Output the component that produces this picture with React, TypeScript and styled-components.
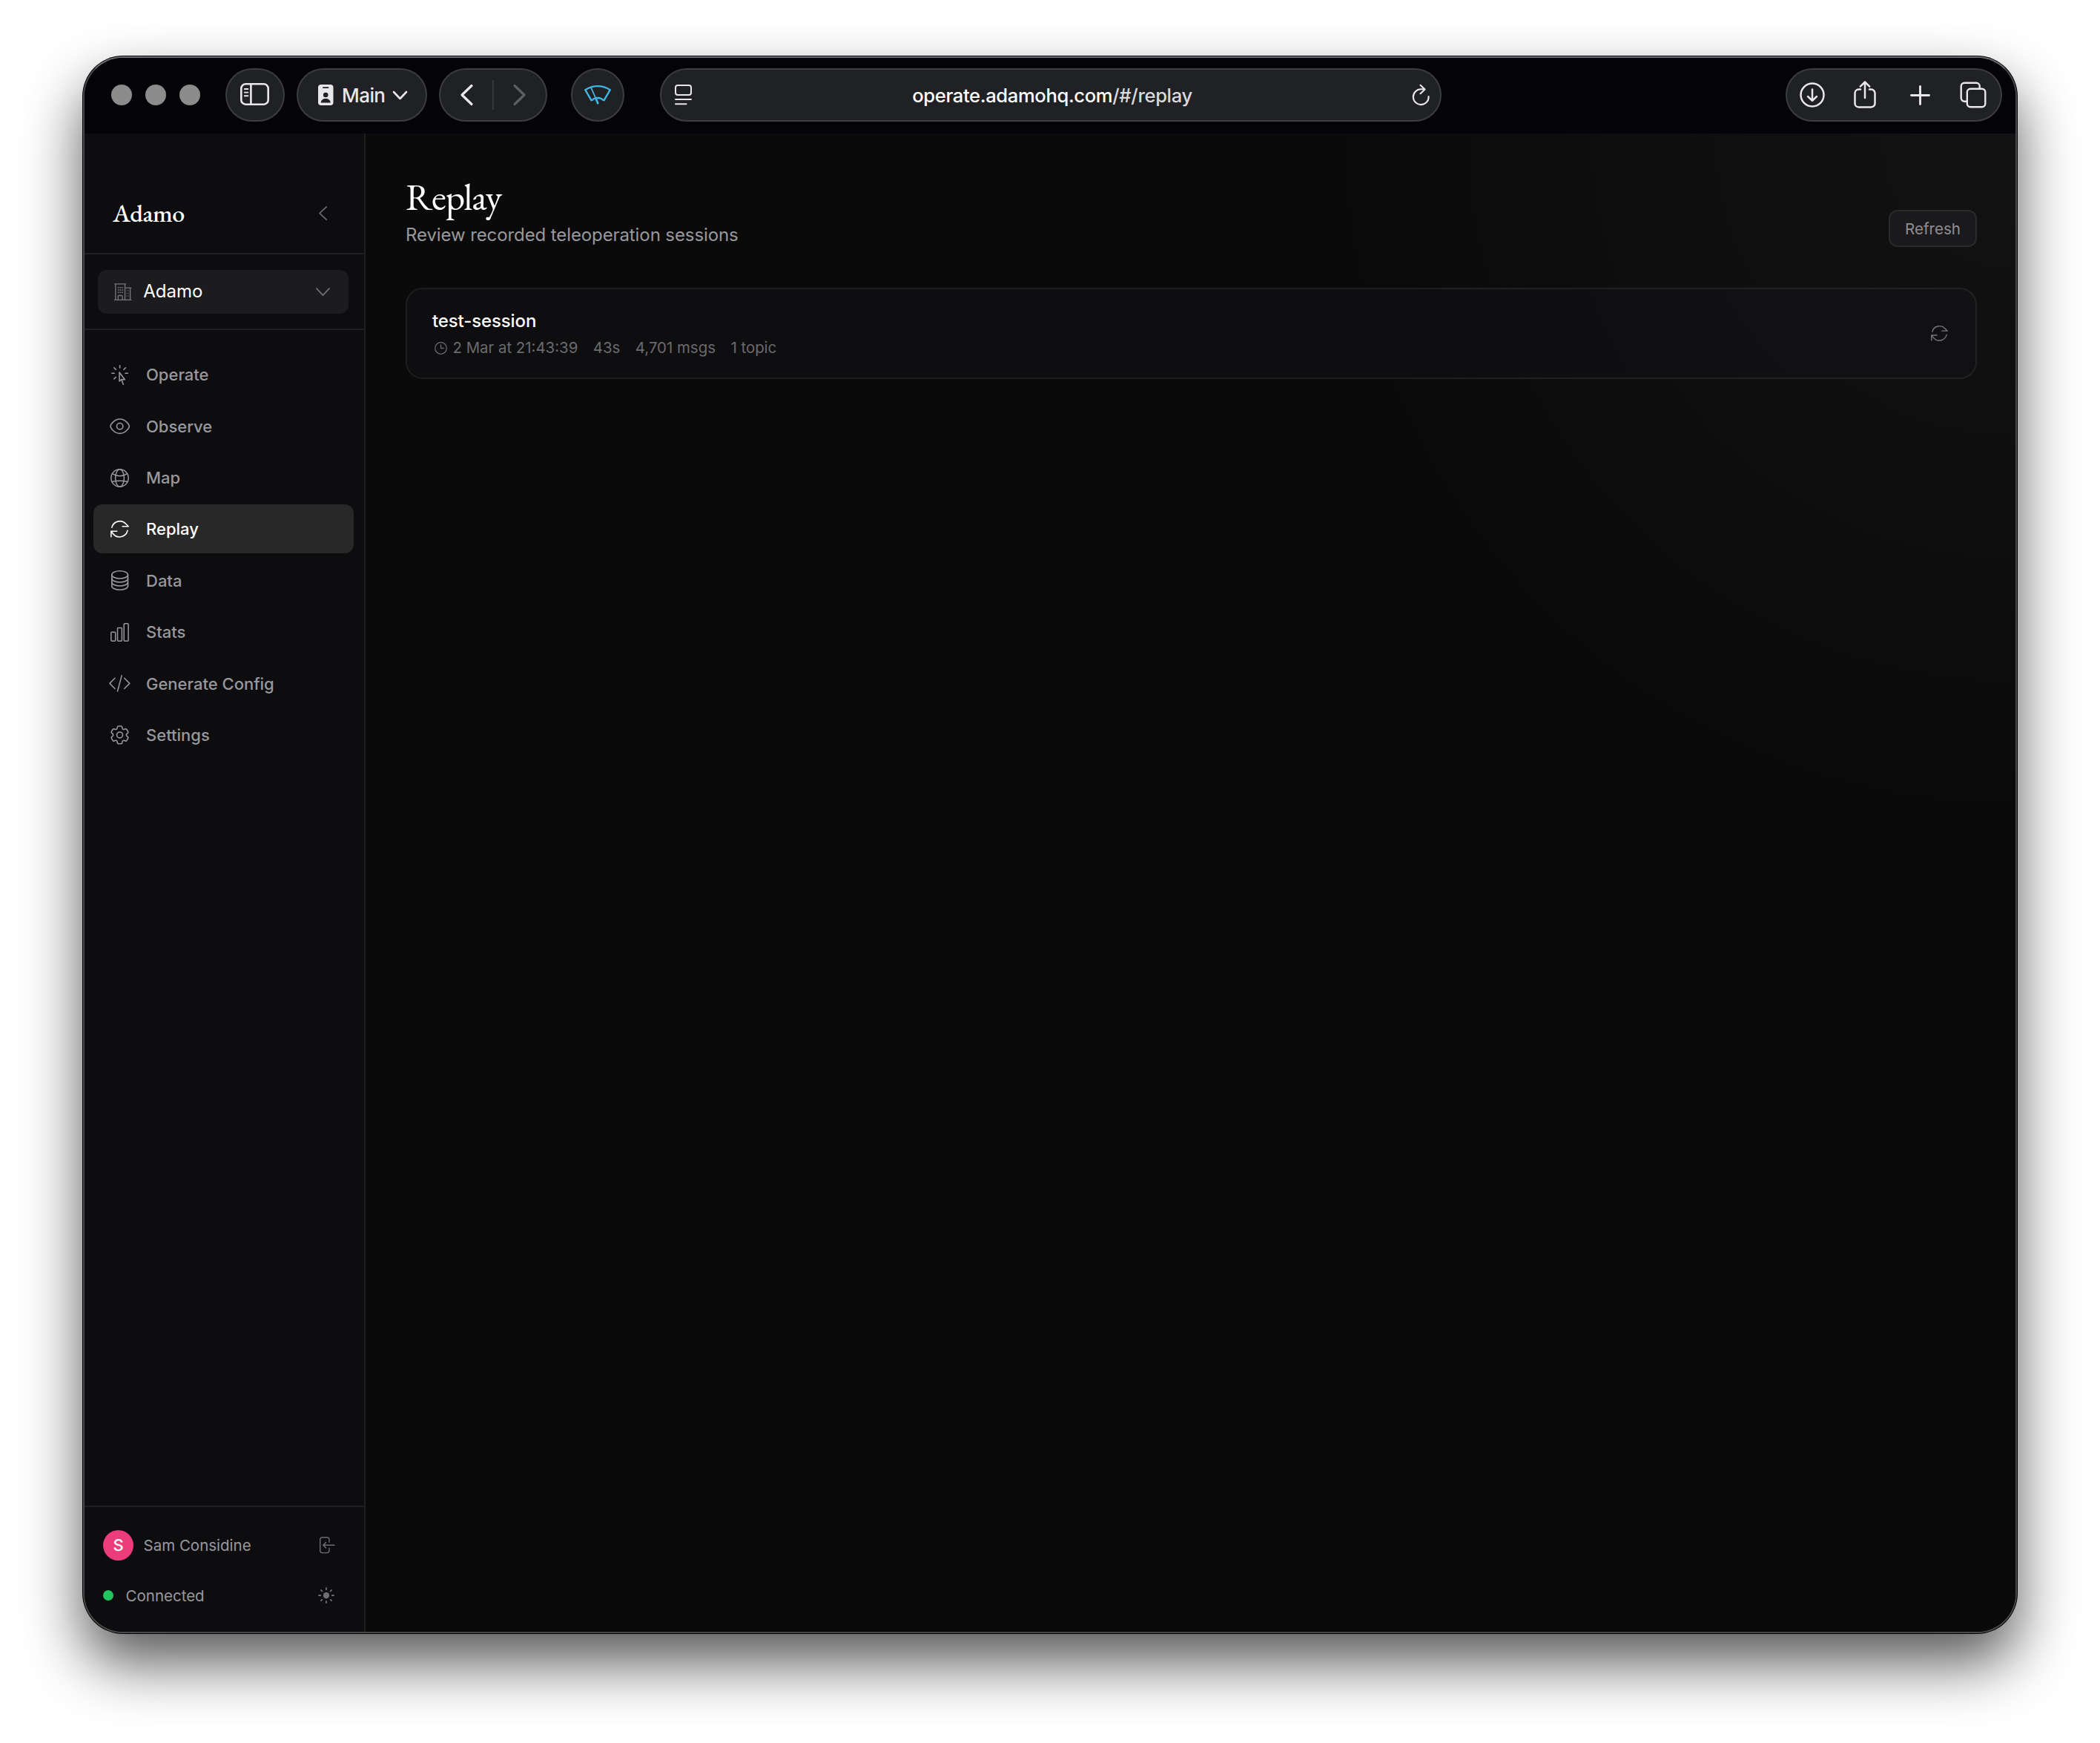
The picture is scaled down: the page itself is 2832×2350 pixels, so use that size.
import React from "react";
import styled, { createGlobalStyle } from "styled-components";

const GlobalStyle = createGlobalStyle`
  * { box-sizing: border-box; }
  html, body { margin: 0; background: #fff; }
  body { font-family: Inter, "Liberation Sans", sans-serif; -webkit-font-smoothing: antialiased; }
  button { font: inherit; color: inherit; }
`;

const Desktop = styled.div`
  width: 2832px;
  height: 2350px;
  padding: 76px 112px 148px;
  overflow: hidden;
  background: #fff;
`;

const Window = styled.div`
  height: 2126px;
  display: flex;
  flex-direction: column;
  overflow: hidden;
  border: 2px solid #4a4a4c;
  border-top-color: #6c6d70;
  border-radius: 54px;
  background: #0a0a0a;
  box-shadow: 0 0 0 1px #000, 0 40px 80px rgba(0, 0, 0, 0.66);
`;

/* Browser chrome */

const Toolbar = styled.header`
  flex: none;
  height: 102px;
  padding: 0 18px 2px 36px;
  display: flex;
  align-items: center;
  background: #040408;
  color: #e8e8ea;
`;

const TrafficLights = styled.div`
  display: flex;
  gap: 18px;
  margin-right: 34px;
`;

const Light = styled.span`
  width: 28px;
  height: 28px;
  border-radius: 50%;
  background: #8c8c8c;
`;

const Pill = styled.div<{ $w: number; $after?: number }>`
  flex: none;
  width: ${(p) => p.$w}px;
  height: 72px;
  margin-right: ${(p) => p.$after ?? 0}px;
  display: flex;
  align-items: center;
  justify-content: center;
  border: 2px solid #3c3d40;
  border-radius: 36px;
  background: #202124;
`;

const SidebarPill = styled(Pill)`
  padding: 0 2px 2px 0;
`;

const ProfilePill = styled(Pill)`
  gap: 11px;
  padding-left: 2px;
  font-size: 26px;
  font-weight: 500;
`;

const ProfileName = styled.span`
  padding-left: 1px;
  letter-spacing: -0.6px;
`;

const HistoryPill = styled(Pill)`
  gap: 26px;
`;

const HistoryDivider = styled.span`
  width: 2px;
  height: 40px;
  background: #36373a;
`;

const AddressPill = styled(Pill)`
  justify-content: space-between;
  padding: 0 14px 0 18px;
  margin-right: auto;
`;

const Address = styled.span`
  font-size: 25.6px;
  font-weight: 500;
  letter-spacing: -0.36px;
  color: #fff;
`;

const AddressPath = styled.span`
  color: #d9d9dc;
`;

const ActionsPill = styled(Pill)`
  justify-content: space-between;
  padding: 0 19px 0 17px;
`;

/* Page */

const Page = styled.div`
  flex: 1;
  display: flex;
  min-height: 0;
`;

const Sidebar = styled.aside`
  flex: none;
  width: 379px;
  display: flex;
  flex-direction: column;
  border-right: 2px solid #1f1f21;
  background: #0d0d0f;
  color: #98989d;
`;

const Brand = styled.div`
  height: 163px;
  padding: 54px 50px 0 38px;
  display: flex;
  align-items: center;
  justify-content: space-between;
  border-bottom: 2px solid #1f1f21;
  color: #6e6e73;
`;

const BrandName = styled.span`
  margin-bottom: 2px;
  font-family: "EB Garamond", "Liberation Serif", serif;
  font-size: 34px;
  font-weight: 500;
  line-height: 40px;
  letter-spacing: -0.5px;
  color: #fff;
`;

const OrgSection = styled.div`
  padding: 21px 21px 20px 18px;
  border-bottom: 2px solid #1f1f21;
`;

const OrgSelect = styled.button`
  width: 100%;
  height: 59px;
  padding: 0 25px 0 22px;
  display: flex;
  align-items: center;
  gap: 16px;
  border: 0;
  border-radius: 12px;
  background: #1c1c1e;
  color: #77777c;
`;

const OrgName = styled.span`
  flex: 1;
  padding-bottom: 2px;
  text-align: left;
  font-size: 24px;
  color: #fff;
`;

const Nav = styled.nav`
  flex: 1;
  padding: 26.6px 14px 0 12px;
  display: flex;
  flex-direction: column;
  gap: 3.46px;
`;

const NavItem = styled.a<{ $active?: boolean }>`
  height: 66px;
  padding: 1px 0 0 20.5px;
  display: flex;
  align-items: center;
  gap: 20.5px;
  border-radius: 12px;
  background: ${(p) => (p.$active ? "#282828" : "transparent")};
  color: ${(p) => (p.$active ? "#fff" : "#98989d")};
  font-size: 22px;
  font-weight: 500;
`;

const NavIcon = styled.span`
  width: 30px;
  display: flex;
  justify-content: center;
`;

const Footer = styled.div`
  height: 170px;
  padding: 30px 40px 0 25px;
  display: flex;
  flex-direction: column;
  gap: 26px;
  border-top: 2px solid #1f1f21;
`;

const FooterRow = styled.div<{ $gap: number }>`
  height: 42px;
  display: flex;
  align-items: center;
  gap: ${(p) => p.$gap}px;
  font-size: 20.5px;
  color: #6e6e73;
`;

const FooterText = styled.span`
  flex: 1;
  color: #98989d;
`;

const Avatar = styled.span`
  width: 41px;
  height: 41px;
  display: flex;
  align-items: center;
  justify-content: center;
  border-radius: 50%;
  background: #ec3d7a;
  color: #fff;
  font-size: 22px;
  font-weight: 500;
`;

const StatusDot = styled.span`
  width: 14px;
  height: 14px;
  border-radius: 50%;
  background: #22c55e;
`;

const Main = styled.main`
  flex: 1;
  padding: 55px 52px 0 54px;
  background: radial-gradient(circle 920px at 100% 0, #121213 0%, #0f0f10 45%, #0a0a0a 100%) #0a0a0a;
`;

const PageHeader = styled.div`
  height: 100px;
  margin-bottom: 53px;
  display: flex;
  align-items: flex-end;
  justify-content: space-between;
`;

const Title = styled.h1`
  margin: 0 0 4px;
  font-family: "EB Garamond", "Liberation Serif", serif;
  font-size: 51px;
  font-weight: 400;
  line-height: 60px;
  letter-spacing: -1.25px;
  color: #fff;
`;

const Subtitle = styled.p`
  margin: 0;
  font-size: 24px;
  line-height: 36px;
  letter-spacing: -0.1px;
  color: #98989d;
`;

const RefreshButton = styled.button`
  width: 119px;
  height: 50px;
  margin-bottom: 2px;
  padding: 0;
  border: 2px solid #2a2a2c;
  border-radius: 12px;
  background: #1a1a1c;
  color: #8e8e93;
  font-size: 20.6px;
`;

const SessionCard = styled.article`
  height: 123px;
  padding: 1px 37px 0 34px;
  display: flex;
  align-items: center;
  justify-content: space-between;
  border: 2px solid rgba(255, 255, 255, 0.08);
  border-radius: 23px;
  background: rgba(20, 20, 24, 0.4);
  background-clip: padding-box;
  color: #77777c;
`;

const SessionInfo = styled.div`
  padding-top: 2px;
`;

const SessionName = styled.div`
  font-size: 24px;
  font-weight: 500;
  line-height: 36px;
  letter-spacing: -0.12px;
  color: #fff;
`;

const SessionMeta = styled.div`
  display: flex;
  align-items: center;
  gap: 20.5px;
  font-size: 20.4px;
  line-height: 36px;
  color: #6a6a6f;
`;

const MetaTime = styled.span`
  display: flex;
  align-items: center;
  gap: 8px;
  padding-left: 2.5px;
`;

/* Icons */

type IconProps = { w: number; h: number; sw?: number; box?: string; children: React.ReactNode };

const IconSvg = styled.svg`
  flex: none;
  display: block;
  overflow: visible;
  fill: none;
  stroke: currentColor;
  stroke-linecap: round;
  stroke-linejoin: round;
`;

const Icon = ({ w, h, sw = 1.6, box, children }: IconProps) => (
  <IconSvg width={w} height={h} viewBox={box ?? `0 0 ${w} ${h}`} strokeWidth={sw}>
    {children}
  </IconSvg>
);

const SidebarIcon = () => (
  <Icon w={39} h={30} sw={2.6}>
    <rect x="1.3" y="1.3" width="36.4" height="27.4" rx="6" />
    <path d="M14.4 1.5v27" />
    <path strokeWidth="1.9" d="M5.8 8h4.6M5.8 12.6h4.6M5.8 17.2h4.6" />
  </Icon>
);

const BadgeIcon = () => (
  <Icon w={20.5} h={28} sw={0}>
    <rect width="20.5" height="28" rx="4" fill="currentColor" />
    <rect x="6" y="3.2" width="8.5" height="1.8" rx=".9" fill="#202124" />
    <circle cx="10.2" cy="14" r="3.3" fill="#202124" />
    <path d="M3.8 24.4c0-3.4 2.8-5.4 6.4-5.4s6.4 2 6.4 5.4z" fill="#202124" />
  </Icon>
);

const ChevronDown = ({ w, h, sw }: { w: number; h: number; sw: number }) => (
  <Icon w={w} h={h} sw={sw}>
    <path d={`M1 1L${w / 2} ${h - 1}L${w - 1} 1`} />
  </Icon>
);

const BackIcon = () => (
  <Icon w={17} h={28} sw={3.2}>
    <path d="M15 1.5L2 14l13 12.5" />
  </Icon>
);

const ForwardIcon = () => (
  <Icon w={17} h={28} sw={3.2}>
    <path stroke="#5e5f62" d="M2 1.5L15 14 2 26.5" />
  </Icon>
);

const WiperIcon = () => (
  <Icon w={36} h={26} sw={2.4}>
    <g stroke="#41b5e2">
      <path d="M1.2 6.2C11.5-.6 24.5-.6 34.8 6.2L26.6 20.2q-2-.4-3.6-2.2-5-2-10 0-1.4 1.9-3.6 2.2z" />
      <path strokeWidth="1.8" d="M9.400 3.800L17.400 22" />
      <path strokeWidth="2.8" d="M15.800 18.200l2.400 6" />
    </g>
  </Icon>
);

const ReaderIcon = () => (
  <Icon w={23} h={28} sw={2}>
    <rect x="1" y="1" width="21" height="13" rx="3" />
    <path d="M1 19.900h21M1 26.300h14.500" />
  </Icon>
);

const ReloadIcon = () => (
  <Icon w={23} h={28} sw={2.1}>
    <path d="M21.600 16A10.400 10.400 0 1 1 11.200 6.300H16" />
    <path d="M10.500.8l6 5.700-6 5.700" />
  </Icon>
);

const DownloadIcon = () => (
  <Icon w={34} h={34} sw={2.5}>
    <circle cx="17" cy="17" r="15.500" />
    <path d="M17 9.500v15M11 19l6 5.800 6-5.800" />
  </Icon>
);

const ShareIcon = () => (
  <Icon w={32} h={37} sw={2.5} box="2 1 32 37">
    <path d="M9 11.600H6.500a5 5 0 0 0-5 5v13.800a5 5 0 0 0 5 5h17a5 5 0 0 0 5-5V16.600a5 5 0 0 0-5-5H21" />
    <path d="M15 23V1.500M8.800 7.600L15 1.500l6.200 6.100" />
  </Icon>
);

const PlusIcon = () => (
  <Icon w={27} h={27} sw={2.9}>
    <path d="M13.500 1.500v24M1.500 13.500h24" />
  </Icon>
);

const TabsIcon = () => (
  <Icon w={35} h={35} sw={2.4} box="0.500 0.500 35 35">
    <rect x="9.300" y="9.300" width="24.500" height="24.500" rx="4.500" />
    <path d="M8.500 26.200H5.700a4.500 4.500 0 0 1-4.500-4.500v-16a4.500 4.500 0 0 1 4.500-4.500h16a4.500 4.500 0 0 1 4.500 4.500V8.500" />
  </Icon>
);

const CollapseIcon = () => (
  <Icon w={11} h={19} sw={1.7}>
    <path d="M10.200.8L1 9.500l9.200 8.700" />
  </Icon>
);

const BuildingIcon = () => (
  <Icon w={23.3} h={23} sw={1.3}>
    <path d="M.6.8h15M1.800 1v21M14.500 1v21M.4 22.300h22.500M14.500 6.200h8.200M21.600 6.500v15.500M5.300 22v-4.500q0-1 1-1h3.800q1 0 1 1V22" />
    <path strokeWidth="1.500" d="M5.400 5.800h.6M8 5.800h.6M10.700 5.800h.6M5.400 9h.6M8 9h.6M10.700 9h.6M5.400 12.200h.6M8 12.200h.6M10.700 12.200h.6" />
    <path strokeWidth="1" d="M17 10h.3M19.200 10h.3M17 13.500h.3M19.200 13.500h.3M17 17h.3M19.200 17h.3" />
  </Icon>
);

const OperateIcon = () => (
  <Icon w={23.3} h={27} sw={1.6}>
    <path d="M11.600.8v3.200M.8 11.300h3.400M19 11.300h3.400M3.800 3.800l2.500 2.500M19.400 3.800l-2.500 2.500M3.800 19l2.500-2.500" />
    <path d="M11 10v12l2.900-2.400 4.400.2z" />
    <path d="M13.900 19.600l2.300 6.600" />
  </Icon>
);

const ObserveIcon = () => (
  <Icon w={27.3} h={21.5} sw={1.6}>
    <path d="M1 10.700C1 8.700 5.800 1 13.650 1S26.300 8.700 26.300 10.700 21.500 20.400 13.650 20.400 1 12.700 1 10.700z" />
    <circle cx="13.650" cy="10.700" r="4.200" />
  </Icon>
);

const GlobeIcon = () => (
  <Icon w={25} h={25} sw={1.5}>
    <circle cx="12.500" cy="12.500" r="11.700" />
    <ellipse cx="12.500" cy="12.500" rx="5.900" ry="11.700" />
    <path d="M2.400 6.600q10.100 6.400 20.200 0M1.900 17.600q10.600-2.600 21.200 0" />
  </Icon>
);

const ReplayIcon = ({ w = 25, h = 23.3, sw = 1.6 }: { w?: number; h?: number; sw?: number }) => (
  <Icon w={w} h={h} sw={sw} box="0 0 25 23.3">
    <path d="M1.900 9.100A11 11 0 0 1 20.400 4L24.200 7.800H16.200" />
    <path d="M.8 21.700v-7.500H8.700M1 14.500L4.200 18.400A11 11 0 0 0 23 13.300" />
  </Icon>
);

const DataIcon = () => (
  <Icon w={23.3} h={27} sw={1.6}>
    <ellipse cx="11.650" cy="5.900" rx="10.850" ry="5.100" />
    <path d="M.8 5.900v15.300c0 2.800 4.900 5 10.850 5s10.850-2.200 10.850-5V5.900" />
    <path d="M.8 11c0 2.800 4.900 5 10.850 5s10.850-2.200 10.850-5M.8 16c0 2.800 4.900 5 10.850 5s10.850-2.200 10.850-5" />
  </Icon>
);

const StatsIcon = () => (
  <Icon w={25} h={25} sw={1.5}>
    <rect x=".8" y="12.300" width="5.900" height="11.900" rx="1" />
    <rect x="9.500" y="6.600" width="5.900" height="17.600" rx="1" />
    <rect x="18.200" y=".8" width="5.900" height="23.400" rx="1" />
  </Icon>
);

const CodeIcon = () => (
  <Icon w={28.7} h={22.7} sw={1.5}>
    <path d="M8 4.300L.9 11.400 8 18.500M20.700 4.300l7.100 7.100-7.100 7.100M17.200.8L11.500 22" />
  </Icon>
);

const SettingsIcon = () => (
  <Icon w={25} h={25.8} sw={1.2} box="2.500 2.200 19 19.600">
    <path d="M9.594 3.940c.09-.542.56-.94 1.110-.94h2.593c.55 0 1.020.398 1.110.94l.213 1.281c.063.374.313.686.645.87.074.04.147.083.22.127.325.196.72.257 1.075.124l1.217-.456a1.125 1.125 0 0 1 1.370.49l1.296 2.247a1.125 1.125 0 0 1-.26 1.431l-1.003.827c-.293.241-.438.613-.43.992a7.723 7.723 0 0 1 0 .255c-.008.378.137.75.43.991l1.004.827c.424.35.534.955.26 1.430l-1.298 2.247a1.125 1.125 0 0 1-1.369.491l-1.217-.456c-.355-.133-.75-.072-1.076.124a6.470 6.470 0 0 1-.22.128c-.331.183-.581.495-.644.869l-.213 1.281c-.09.543-.56.94-1.110.94h-2.594c-.55 0-1.019-.398-1.110-.94l-.213-1.281c-.062-.374-.312-.686-.644-.87a6.520 6.520 0 0 1-.22-.127c-.325-.196-.72-.257-1.076-.124l-1.217.456a1.125 1.125 0 0 1-1.369-.49l-1.297-2.247a1.125 1.125 0 0 1 .26-1.431l1.004-.827c.292-.24.437-.613.43-.991a6.932 6.932 0 0 1 0-.255c.007-.38-.138-.751-.43-.992l-1.004-.827a1.125 1.125 0 0 1-.26-1.430l1.297-2.247a1.125 1.125 0 0 1 1.370-.491l1.216.456c.356.133.751.072 1.076-.124.072-.044.146-.086.22-.128.332-.183.582-.495.644-.869l.214-1.280z" />
    <circle cx="12" cy="12" r="3" />
  </Icon>
);

const LogoutIcon = () => (
  <Icon w={20.5} h={22.3} sw={1.4}>
    <path d="M13 7.200V3.700a3 3 0 0 0-3-3H3.700a3 3 0 0 0-3 3v14.900a3 3 0 0 0 3 3H10a3 3 0 0 0 3-3v-3.500" />
    <path d="M20 11.200H4.800M8.600 7.400l-3.800 3.800 3.800 3.800" />
  </Icon>
);

const SunIcon = () => (
  <Icon w={22} h={22} sw={1.8}>
    <circle cx="11" cy="11" r="4.200" fill="currentColor" stroke="none" />
    <path d="M11 1v2.200M11 18.800V21M1 11h2.200M18.800 11H21M3.900 3.900l1.500 1.500M16.600 16.600l1.500 1.500M3.900 18.100l1.500-1.500M16.600 5.400l1.500-1.500" />
  </Icon>
);

const ClockIcon = () => (
  <Icon w={17} h={17} sw={1.3}>
    <circle cx="8.500" cy="8.500" r="7.800" />
    <path d="M8.500 3.800v4.700h3.800" />
  </Icon>
);

const navItems = [
  { label: "Operate", icon: <OperateIcon /> },
  { label: "Observe", icon: <ObserveIcon /> },
  { label: "Map", icon: <GlobeIcon /> },
  { label: "Replay", icon: <ReplayIcon />, active: true },
  { label: "Data", icon: <DataIcon /> },
  { label: "Stats", icon: <StatsIcon /> },
  { label: "Generate Config", icon: <CodeIcon /> },
  { label: "Settings", icon: <SettingsIcon /> },
];

export default function App() {
  return (
    <>
      <GlobalStyle />
      <Desktop>
        <Window>
          <Toolbar>
            <TrafficLights>
              <Light />
              <Light />
              <Light />
            </TrafficLights>
            <SidebarPill $w={80} $after={16}>
              <SidebarIcon />
            </SidebarPill>
            <ProfilePill $w={176} $after={16}>
              <BadgeIcon />
              <ProfileName>Main</ProfileName>
              <ChevronDown w={19} h={11} sw={2.6} />
            </ProfilePill>
            <HistoryPill $w={146} $after={32}>
              <BackIcon />
              <HistoryDivider />
              <ForwardIcon />
            </HistoryPill>
            <Pill $w={72} $after={48}>
              <WiperIcon />
            </Pill>
            <AddressPill $w={1054}>
              <ReaderIcon />
              <Address>
                operate.adamohq.com<AddressPath>/#/replay</AddressPath>
              </Address>
              <ReloadIcon />
            </AddressPill>
            <ActionsPill $w={292}>
              <DownloadIcon />
              <ShareIcon />
              <PlusIcon />
              <TabsIcon />
            </ActionsPill>
          </Toolbar>
          <Page>
            <Sidebar>
              <Brand>
                <BrandName>Adamo</BrandName>
                <CollapseIcon />
              </Brand>
              <OrgSection>
                <OrgSelect>
                  <BuildingIcon />
                  <OrgName>Adamo</OrgName>
                  <ChevronDown w={19} h={11} sw={1.8} />
                </OrgSelect>
              </OrgSection>
              <Nav>
                {navItems.map((item) => (
                  <NavItem key={item.label} $active={item.active}>
                    <NavIcon>{item.icon}</NavIcon>
                    {item.label}
                  </NavItem>
                ))}
              </Nav>
              <Footer>
                <FooterRow $gap={13.5}>
                  <Avatar>S</Avatar>
                  <FooterText>Sam Considine</FooterText>
                  <LogoutIcon />
                </FooterRow>
                <FooterRow $gap={16.5}>
                  <StatusDot />
                  <FooterText>Connected</FooterText>
                  <SunIcon />
                </FooterRow>
              </Footer>
            </Sidebar>
            <Main>
              <PageHeader>
                <div>
                  <Title>Replay</Title>
                  <Subtitle>Review recorded teleoperation sessions</Subtitle>
                </div>
                <RefreshButton>Refresh</RefreshButton>
              </PageHeader>
              <SessionCard>
                <SessionInfo>
                  <SessionName>test-session</SessionName>
                  <SessionMeta>
                    <MetaTime>
                      <ClockIcon />
                      2 Mar at 21:43:39
                    </MetaTime>
                    <span>43s</span>
                    <span>4,701 msgs</span>
                    <span>1 topic</span>
                  </SessionMeta>
                </SessionInfo>
                <ReplayIcon w={23} h={21.4} sw={1.5} />
              </SessionCard>
            </Main>
          </Page>
        </Window>
      </Desktop>
    </>
  );
}
